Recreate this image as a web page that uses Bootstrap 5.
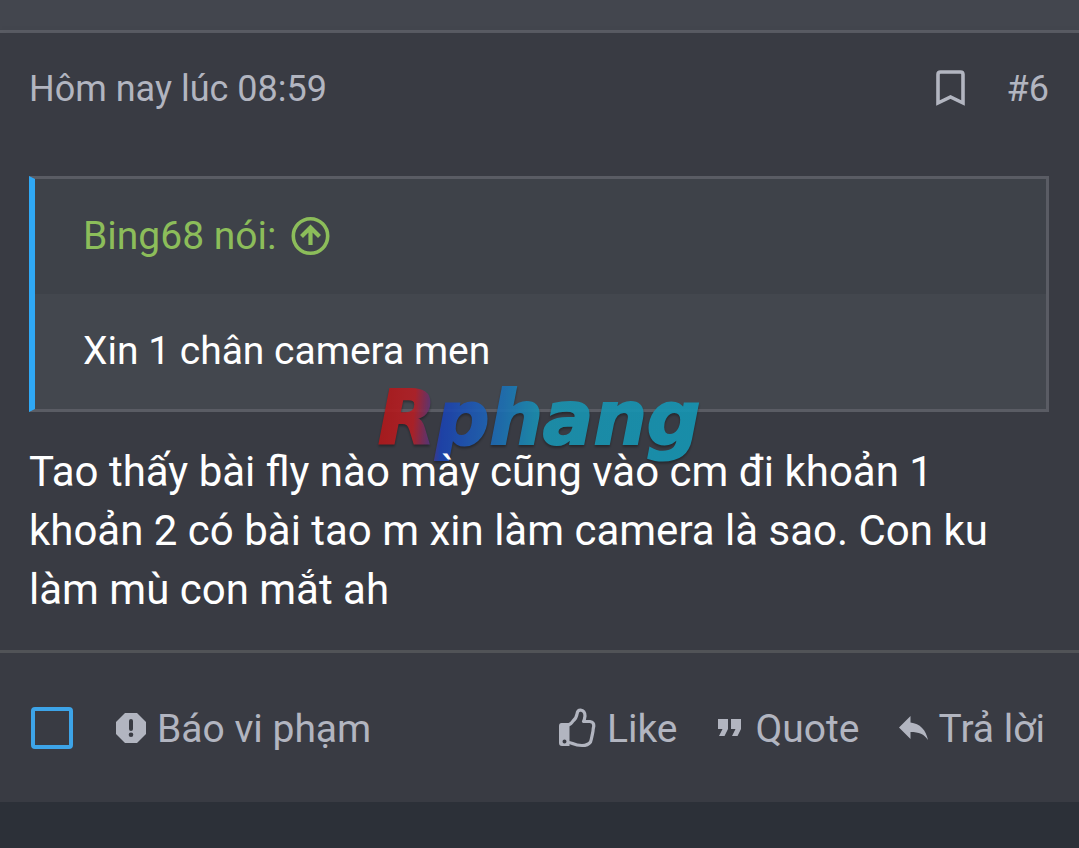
<!DOCTYPE html>
<html lang="vi">
<head>
<meta charset="utf-8">
<meta name="viewport" content="width=device-width, initial-scale=1">
<title>Bài viết #6</title>
<link href="https://cdn.jsdelivr.net/npm/bootstrap@5.3.0/dist/css/bootstrap.min.css" rel="stylesheet">
<style>
  body { background: #2c3038; color: #fff; font-family: Roboto, "Noto Sans", sans-serif; }
  a, .muted-text { color: #b2b5c0; text-decoration: none; }
  .user-strip { height: 33px; background: #43464e; border-bottom: 3px solid #5a5c64; }
  .post { background: #393b43; box-shadow: 0 6px 10px -2px rgba(0, 0, 0, .6); }
  .post-head { padding: 29px 30px 0 29px; font-size: 36px; line-height: 54px; }
  .post-head svg { margin-bottom: 2px; }
  .post-head .actions { gap: 42px; }
  .post-body { padding: 60px 30px 31px 29px; }
  .quote-box { border: 3px solid #5a5c64; border-left: 6px solid #2fa8f5; background: #43474e; font-size: 39px; line-height: 59px; }
  .quote-title, .quote-text { padding: 28px 48px; }
  .quote-title { background: #3e4249; }
  .quote-title a { color: #8cbd5a; gap: 15px; }
  .watermark { position: absolute; left: 50%; top: 372px; transform: translateX(-50%); z-index: 1; opacity: .9; width: 336px; pointer-events: none; filter: drop-shadow(0 2px 1px rgba(0, 0, 0, .35)); }
  .watermark text { font-family: "DejaVu Sans", sans-serif; font-weight: 700; font-style: italic; font-size: 75px; }
  .message { position: relative; z-index: 2; margin: 30px 0 0; font-size: 42px; line-height: 59px; }
  .post-foot { border-top: 3px solid #515357; padding: 47px 34px 43px 31px; font-size: 39px; line-height: 59px; }
  .post-foot .tools { gap: 43px; }
  .post-foot .reacts { gap: 39px; }
  .post-foot a { gap: 11px; }
  .post-foot svg { margin-bottom: 4px; }
  .post-foot .form-check-input { width: 42px; height: 42px; margin: 0 0 4px; border: 4px solid #3da4e8; border-radius: 4px; background-color: transparent; }
  svg { flex: none; display: block; }
</style>
</head>
<body>
<main class="position-relative">
  <div class="user-strip"></div>
  <article class="post">
    <header class="post-head d-flex justify-content-between align-items-center">
      <time class="muted-text">Hôm nay lúc 08:59</time>
      <div class="actions d-flex align-items-center">
        <a href="#" aria-label="Lưu">
          <svg width="29" height="37" viewBox="0 0 29 37" fill="none" stroke="#b2b5c0" stroke-width="3.600"><path d="M2 33V4.500Q2 2 4.500 2H24.500Q27 2 27 4.500V33L14.500 27Z"/></svg>
        </a>
        <a href="#">#6</a>
      </div>
    </header>
    <div class="post-body">
      <blockquote class="quote-box m-0">
        <div class="quote-title">
          <a href="#" class="d-inline-flex align-items-center">Bing68 nói:
            <svg width="39" height="39" viewBox="0 0 39 39" fill="none" stroke="#8cbd5a"><circle cx="19.500" cy="19" r="17.200" stroke-width="3.600"/><path d="M19.500 28V11M10.500 19.500L19.500 10.500L28.500 19.500" stroke-width="4.200"/></svg>
          </a>
        </div>
        <div class="quote-text">Xin 1 chân camera men</div>
      </blockquote>
      <p class="message">Tao thấy bài fly nào mày cũng vào cm đi khoản 1 khoản 2 có bài tao m xin làm camera là sao. Con ku làm mù con mắt ah</p>
    </div>
    <footer class="post-foot d-flex justify-content-between align-items-center">
      <div class="tools d-flex align-items-center">
        <input class="form-check-input" type="checkbox" aria-label="Chọn bài viết">
        <a href="#" class="d-flex align-items-center">
          <svg width="30" height="30" viewBox="0 0 30 30"><path fill="#b2b5c0" d="M9 0H21L30 9V21L21 30H9L0 21V9Z"/><path d="M15 8V16" stroke="#393b43" stroke-width="4" stroke-linecap="round"/><circle cx="15" cy="21.800" r="2.300" fill="#393b43"/></svg>
          Báo vi phạm</a>
      </div>
      <div class="reacts d-flex align-items-center">
        <a href="#" class="d-flex align-items-center">
          <svg width="37" height="40" viewBox="0 0 37 40"><path fill="#b2b5c0" fill-rule="evenodd" d="M2.500 15H10.500V38H3Q0 38 0 35V18Q0 15 2.500 15ZM5.500 31.500A2 2 0 1 0 5.500 35.500A2 2 0 0 0 5.500 31.500Z"/><path d="M9 17Q12 16.500 14 13Q17.500 10 18 6Q18.500 2 21.500 2Q26 2.500 26 8Q25.500 12 24.500 13.500H31Q35 14 34.800 18Q34 21 34 23Q33.500 26 33 28Q32.500 31 31.500 34Q29 37.500 23 37.500Q18 37.500 13.500 35.500Q11 34.500 9 34.500" fill="none" stroke="#b2b5c0" stroke-width="3.200" stroke-linejoin="round"/></svg>
          Like</a>
        <a href="#" class="d-flex align-items-center">
          <svg width="28" height="18" viewBox="0 0 28 18"><path fill="#b2b5c0" d="M1 0H11V10L7.500 17H2L5.500 10H1ZM14 0H24V10L20.500 17H15L18.500 10H14Z"/></svg>
          Quote</a>
        <a href="#" class="d-flex align-items-center">
          <svg width="29" height="24" viewBox="0 0 29 24"><path fill="#b2b5c0" d="M0 11.500L11.500 0V6.500C21 7.500 27 14 29 24C25 18 20 16 11.500 16V23Z"/></svg>
          Trả lời</a>
      </div>
    </footer>
  </article>
  <svg class="watermark" viewBox="0 0 336 100" height="100" role="img" aria-label="Rphang">
    <defs><linearGradient id="brand" gradientUnits="userSpaceOnUse" x1="8" y1="66" x2="328" y2="88">
      <stop offset="0" stop-color="#b0181b"/><stop offset=".1" stop-color="#b51f25"/><stop offset=".19" stop-color="#1c42b0"/><stop offset=".32" stop-color="#1e61b5"/><stop offset=".5" stop-color="#1993b0"/><stop offset="1" stop-color="#1596b4"/>
    </linearGradient></defs>
    <text x="6" y="72" fill="url(#brand)" stroke="url(#brand)" stroke-width="2">Rphang</text>
  </svg>
</main>
<script src="https://cdn.jsdelivr.net/npm/bootstrap@5.3.0/dist/js/bootstrap.bundle.min.js"></script>
</body>
</html>
